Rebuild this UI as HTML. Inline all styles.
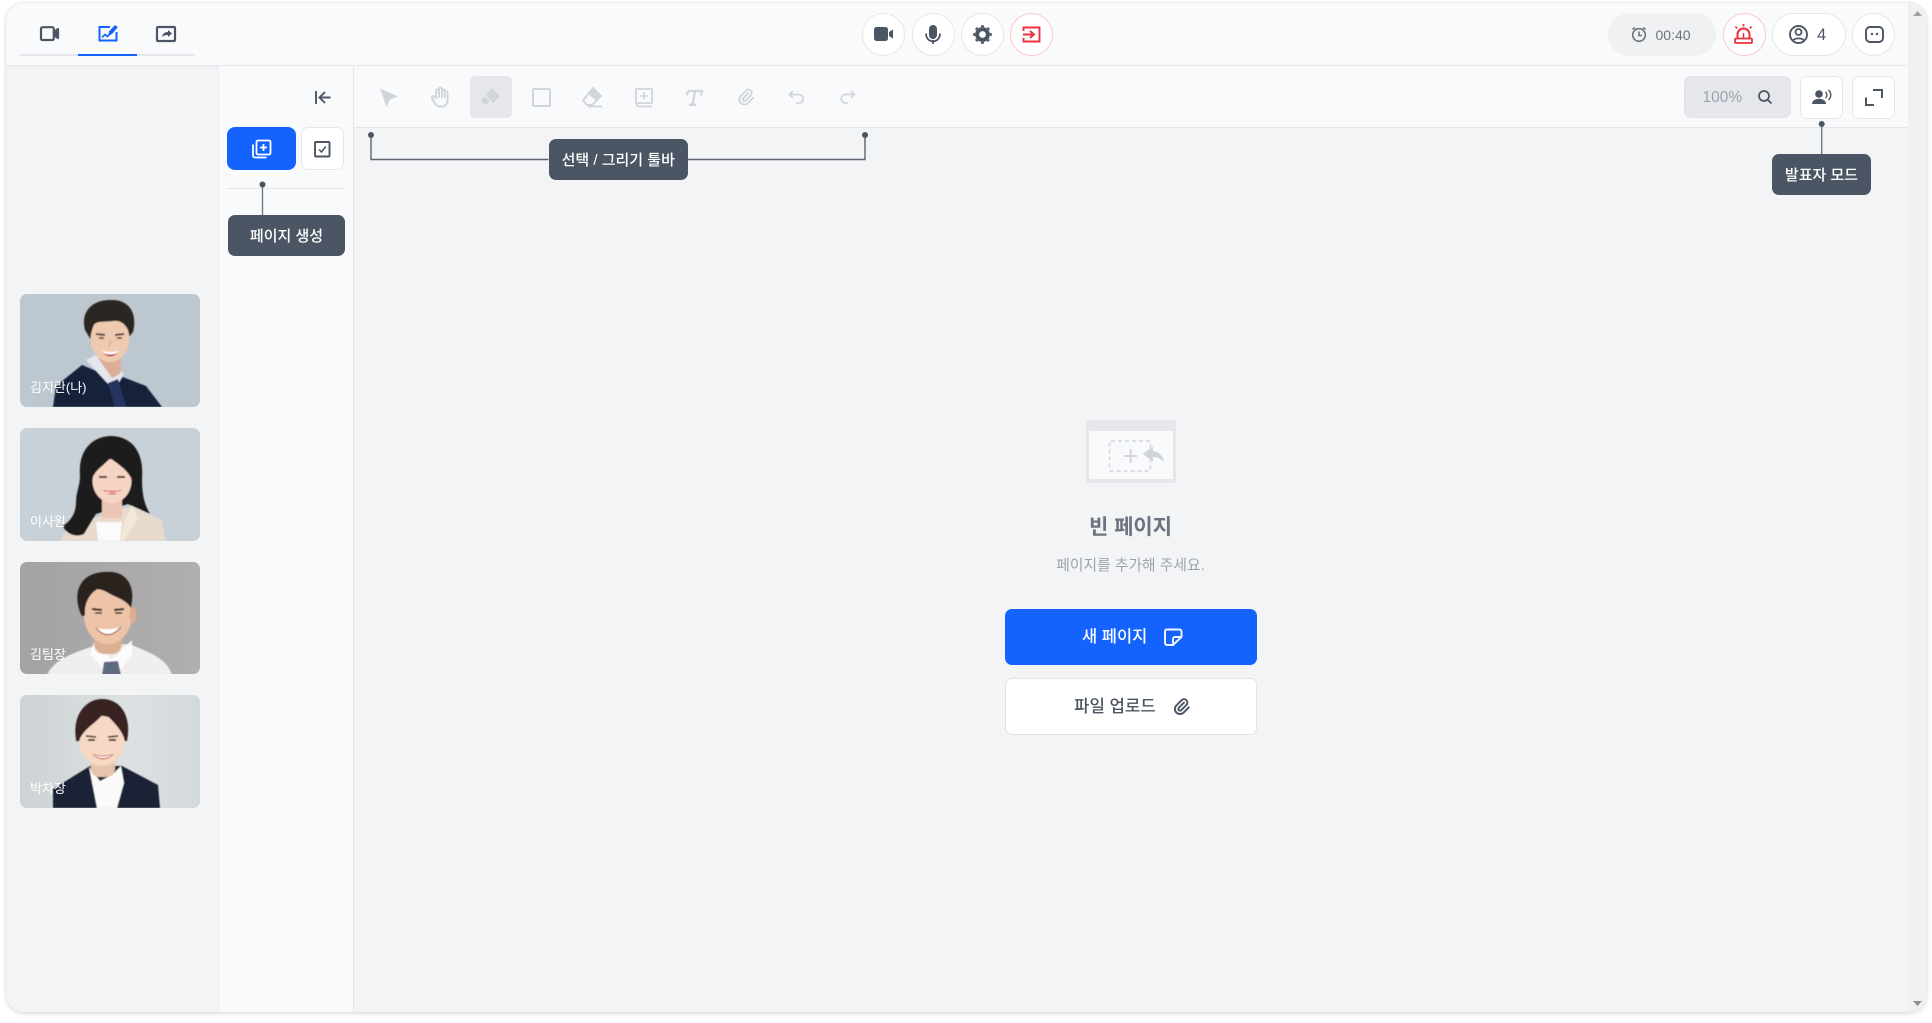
<!DOCTYPE html>
<html lang="ko"><head><meta charset="utf-8"><title>Whiteboard</title>
<style>
*{box-sizing:border-box;margin:0;padding:0}
html,body{width:1932px;height:1023px;overflow:hidden;background:#fff;font-family:"Liberation Sans","Noto Sans CJK KR",sans-serif}
.a{position:absolute}
.frame{left:6px;top:3px;width:1921px;height:1009px;border-radius:18px;overflow:hidden;background:#f3f4f6;box-shadow:0 2px 5px rgba(0,0,0,.13),0 -1px 2px rgba(0,0,0,.08)}
.hdr{left:6px;top:3px;width:1902px;height:63px;background:#f9fafb;border-bottom:1px solid #e5e7eb;border-radius:18px 0 0 0;box-shadow:0 1px 2px rgba(0,0,0,.04)}
.circ{border-radius:50%;background:#fff;border:1px solid #e5e7eb;width:43px;height:43px;top:13px}
.pill{border-radius:22px;top:13px;height:43px}
.sq{border-radius:7px;background:#fff;border:1px solid #e5e7eb}
.tip{background:#4b5563;color:#fff;border-radius:7px;font-size:15px;font-weight:500;display:flex;align-items:center;justify-content:center;white-space:nowrap}
.t{white-space:nowrap;line-height:1}
.name{position:absolute;left:10px;bottom:10px;color:#fff;font-size:13px;line-height:18px;white-space:nowrap}
.card{left:20px;width:180px;height:112.5px;border-radius:7px;overflow:hidden}
.card svg{display:block}
</style></head><body>
<div class="a frame"></div>
<div class="a" style="left:1908px;top:3px;width:19px;height:1009px;background:#f1f1f1;border-radius:0 18px 18px 0"></div>
<div class="a hdr"></div>
<!-- tabs -->
<div class="a" style="left:20px;top:53.5px;width:175px;height:2px;background:#e5e7eb"></div>
<div class="a" style="left:78px;top:53.5px;width:59px;height:2.3px;background:#1463ff"></div>
<!-- page panel -->
<div class="a" style="left:218px;top:66px;width:136px;height:946px;background:#f9fafb;border-left:1px solid #eceef1;border-right:1px solid #e5e7eb"></div>
<!-- toolbar -->
<div class="a" style="left:354px;top:66px;width:1554px;height:62px;background:#f9fafb;border-bottom:1px solid #e5e7eb"></div>
<div class="a" style="left:470px;top:76px;width:42px;height:42px;border-radius:5px;background:#e5e7eb"></div>
<div class="a" style="left:227px;top:127px;width:69px;height:43px;border-radius:8px;background:#1463ff"></div>
<div class="a sq" style="left:301px;top:127px;width:43px;height:43px"></div>
<div class="a" style="left:227px;top:188px;width:117px;height:1px;background:#e5e7eb"></div>
<!-- header controls -->
<div class="a circ" style="left:862px"></div>
<div class="a circ" style="left:911.5px"></div>
<div class="a circ" style="left:961px"></div>
<div class="a circ" style="left:1010px;border-color:#fbc9cc"></div>
<div class="a pill" style="left:1608px;width:108px;background:#f0f1f3"></div>
<div class="a t" style="left:1655.5px;top:27.500px;font-size:14px;color:#6b7280">00:40</div>
<div class="a circ" style="left:1723px;border-color:#fbc9cc"></div>
<div class="a pill" style="left:1772px;width:74px;background:#fff;border:1px solid #e5e7eb"></div>
<div class="a t" style="left:1817px;top:27px;font-size:16.500px;font-weight:500;color:#4b5563">4</div>
<div class="a circ" style="left:1852px"></div>
<div class="a" style="left:1684px;top:76px;width:107px;height:42px;border-radius:7px;background:#e5e7eb;border:1px solid #dfe2e6"></div>
<div class="a t" style="left:1702.5px;top:89.5px;font-size:15.500px;color:#9ca3af">100%</div>
<div class="a sq" style="left:1800px;top:75.5px;width:43px;height:43px"></div>
<div class="a sq" style="left:1852px;top:75.5px;width:43px;height:43px"></div>
<!-- tooltips -->
<div class="a tip" style="left:228px;top:215px;width:117px;height:41px">페이지 생성</div>
<div class="a tip" style="left:548.5px;top:139px;width:139.5px;height:41px">선택 / 그리기 툴바</div>
<div class="a tip" style="left:1772px;top:154px;width:99px;height:41px">발표자 모드</div>
<!-- centre -->
<div class="a" style="left:1086px;top:420px;width:90px;height:63px;background:#e5e7eb;border-radius:2px"></div>
<div class="a" style="left:1089px;top:431px;width:84px;height:48px;background:#f9fafb"></div>
<div class="a t" style="left:1030px;width:201px;text-align:center;top:516.500px;font-size:21px;font-weight:700;color:#6b7280">빈 페이지</div>
<div class="a t" style="left:1030px;width:201px;text-align:center;top:558.500px;font-size:14.800px;color:#9ca3af">페이지를 추가해 주세요.</div>
<div class="a" style="left:1005px;top:609px;width:252px;height:56px;border-radius:7px;background:#1463ff"></div>
<div class="a t" style="left:1082px;top:629px;font-size:16.500px;font-weight:500;color:#fff">새 페이지</div>
<div class="a" style="left:1005px;top:678px;width:252px;height:56.500px;border-radius:7px;background:#fff;border:1px solid #e1e4e8"></div>
<div class="a t" style="left:1074px;top:698.500px;font-size:16.800px;font-weight:500;color:#4b5563">파일 업로드</div>

<!-- participant cards -->
<div class="a card" style="top:294.3px"><svg width="180" height="113" viewBox="0 0 180 113"><defs><filter id="b"><feGaussianBlur stdDeviation=".55"/></filter></defs><rect width="180" height="113" fill="#bdc7d0"/><g filter="url(#b)">
<path d="M33 113L36 92L62 71L74 76L100 82L126 92L142 113Z" fill="#18213a"/>
<path d="M66 66L78 60L104 80L98 90L90 92Z" fill="#e3e8ee"/>
<path d="M88 89L98 85L106 113H95Z" fill="#283460"/>
<path d="M78 54H102L100 80L92 84L78 64Z" fill="#dcae96"/>
<path d="M65 36C60 16 74 6 90 6C108 5 118 18 113 38L108 44C108 34 104 28 98 26C88 30 78 28 74 30C72 34 71 42 71 46Z" fill="#2b2624"/>
<ellipse cx="90" cy="45" rx="19.500" ry="23" fill="#f0c9b1"/>
<path d="M71 38C68 30 74 16 90 14C104 14 112 26 109 38C106 30 100 26 94 27C86 28 78 27 74 30Z" fill="#2b2624"/>
<path d="M76 40l9 1M95 41l9-1" stroke="#3a2a25" stroke-width="1.800"/>
<path d="M79 44h5M97 44h5" stroke="#4a3632" stroke-width="1.400"/>
<path d="M82 57Q90 66 99 57Q90 59 82 57Z" fill="#fff"/><path d="M83 59Q90 66 98 59Q90 62 83 59Z" fill="#b9484a"/>
<path d="M91 46L89 54" stroke="#d8a98e" stroke-width="1"/>
</g></svg><div class="name">김지란(나)</div></div>
<div class="a card" style="top:428px"><svg width="180" height="113" viewBox="0 0 180 113"><rect width="180" height="113" fill="#c9d1d8"/><g filter="url(#b)">
<path d="M40 113L48 100L80 88L112 78L142 92L145 113Z" fill="#e8dacc"/>
<path d="M76 94H102L100 113H78Z" fill="#fbfbfb"/>
<path d="M112 78L118 90L104 113H100L105 92Z" fill="#f3e7da"/>
<path d="M60 48C58 20 74 8 92 8C112 9 124 24 122 50C122 66 124 76 130 86L108 76L76 86L64 106C56 110 46 106 43 98C52 92 56 84 56 74C56 64 60 58 60 48Z" fill="#1e1a1b"/>
<rect x="82" y="62" width="20" height="28" fill="#ecc6b4"/>
<ellipse cx="92" cy="53" rx="19.500" ry="22" fill="#f6d4c3"/>
<path d="M72 52C70 38 78 26 88 24C98 22 110 32 112 52C108 42 98 36 90 30C84 38 74 42 72 52Z" fill="#1e1a1b"/>
<path d="M79 49h8M97 49h8" stroke="#2c2220" stroke-width="1.800"/>
<path d="M83 62Q92 71 102 62Q92 64 83 62Z" fill="#e04a50"/><path d="M85 63Q92 66 100 63L98 65H87Z" fill="#fff"/>
</g></svg><div class="name">이사원</div></div>
<div class="a card" style="top:561.5px"><svg width="180" height="113" viewBox="0 0 180 113"><defs><linearGradient id="g3" x1="0" x2="1"><stop offset="0" stop-color="#a4a3a3"/><stop offset="1" stop-color="#b0aeae"/></linearGradient></defs><rect width="180" height="113" fill="url(#g3)"/><g filter="url(#b)">
<path d="M27 113C34 98 50 92 74 84L110 82C126 90 146 94 152 113Z" fill="#f1eeee"/>
<path d="M74 80L92 98L112 78L112 92L100 108L84 108L70 92Z" fill="#fdfcfc"/>
<path d="M84 100L98 99L101 113H82Z" fill="#5d6b80"/>
<rect x="74" y="68" width="28" height="24" rx="10" fill="#dcb092"/>
<path d="M60 50C52 28 62 10 86 10C106 8 116 24 111 44L112 54H62Z" fill="#29241f"/>
<ellipse cx="88" cy="53" rx="24" ry="29" fill="#edc4a8"/>
<ellipse cx="113" cy="53" rx="3.500" ry="8" fill="#dcac90"/>
<path d="M63 52C58 34 66 16 86 14C104 12 114 26 111 46C106 38 98 36 90 32C84 28 78 26 74 28C68 36 64 42 65 54Z" fill="#29241f"/>
<path d="M72 47l10 1M94 48l10-1" stroke="#2a201d" stroke-width="2"/>
<path d="M75 51h7M95 51h7" stroke="#3c2c28" stroke-width="1.500"/>
<path d="M76 66Q88 78 101 65Q88 69 76 66Z" fill="#fff"/><path d="M76 66Q88 80 101 65" stroke="#9c5a50" stroke-width="1" fill="none"/>
</g></svg><div class="name">김팀장</div></div>
<div class="a card" style="top:695px"><svg width="180" height="113" viewBox="0 0 180 113"><defs><linearGradient id="g4" x1="0" x2="1"><stop offset="0" stop-color="#ccd3d4"/><stop offset=".6" stop-color="#dde1e2"/><stop offset="1" stop-color="#d2d9dc"/></linearGradient></defs><rect width="180" height="113" fill="url(#g4)"/><g filter="url(#b)">
<path d="M33 113V94L70 71L102 71L138 90L140 113Z" fill="#1b2235"/>
<path d="M69 72L80 86L92 80L101 71L104 88L97 113H77Z" fill="#fafaf8"/>
<rect x="71" y="58" width="24" height="24" rx="8" fill="#e7c4ae"/>
<path d="M56 44C52 20 66 4 82 4C100 4 112 20 107 46H56Z" fill="#382420"/>
<ellipse cx="82" cy="46" rx="22.500" ry="25" fill="#f6d8c5"/>
<path d="M59 46C56 28 68 9 84 8C98 9 108 26 105 46C102 34 92 26 84 17C78 28 64 32 59 46Z" fill="#382420"/>
<path d="M66 41l10 1M88 42l10-1" stroke="#2a1f1c" stroke-width="1.600"/>
<path d="M68 45h7M89 45h7" stroke="#2f2320" stroke-width="1.800"/>
<path d="M72 59Q83 70 94 59Q83 62 72 59Z" fill="#d3605d"/><path d="M74 60Q83 63 92 60Q83 66 74 60Z" fill="#fff"/>
</g></svg><div class="name">박차장</div></div>

<!-- icons & connectors -->
<svg class="a" style="left:0;top:0" width="1932" height="1023" viewBox="0 0 1932 1023" fill="none">
<!-- scrollbar arrows -->
<path d="M1917.5 11L1922 16H1913Z" fill="#a3a3a3"/><path d="M1913 1001H1922L1917.5 1006Z" fill="#8f8f8f"/>
<!-- tabs -->
<g stroke="#4b5563" stroke-width="2.2" stroke-linejoin="round">
<rect x="41" y="27.2" width="12.8" height="12.8" rx="1.5"/><path d="M54 32L58 29V38L54 35Z" fill="#4b5563"/>
<rect x="157" y="27" width="18" height="14" rx="1"/></g>
<path d="M162 37C162.5 33.5 165 32 168 32V30L172 33.5L168 37V35C165.5 35 163.5 35.5 162 37Z" fill="#4b5563"/>
<path d="M110 27H99.500V40.500H116.500V32" stroke="#1463ff" stroke-width="2"/>
<path d="M102 37.500L105 34.500L107.500 36.500L111 33" stroke="#1463ff" stroke-width="1.600"/>
<path d="M109 31.500L115 25L117.800 27.200L112 34L108.500 35Z" fill="#1463ff"/>
<!-- circle buttons -->
<path d="M874 29.500A2.500 2.500 0 0 1 876.500 27H885.500A2.500 2.500 0 0 1 888 29.500V38.500A2.500 2.500 0 0 1 885.500 41H876.500A2.500 2.500 0 0 1 874 38.500Z" fill="#4b5563"/><path d="M889 32L893 29.500V38.500L889 36Z" fill="#4b5563"/>
<rect x="929" y="25" width="8" height="14" rx="4" fill="#4b5563"/><path d="M926 33.500C926 44 940 44 940 33.500M933 40V44" stroke="#4b5563" stroke-width="1.800"/>
<circle cx="982.500" cy="34.500" r="5.400" stroke="#4b5563" stroke-width="4"/>
<path d="M982.500 27V25.300M982.500 42V43.700M975 34.500H973.300M990 34.500H991.700M977.200 29.200L976 28M987.800 39.800L989 41M977.200 39.800L976 41M987.800 29.200L989 28" stroke="#4b5563" stroke-width="3"/>
<path d="M1023.500 31V27.500H1039.500V41.500H1023.500V38M1023 34.500H1033M1030 31L1034 34.500L1030 38" stroke="#ee2f3d" stroke-width="1.900"/>
<!-- clock -->
<circle cx="1639" cy="35" r="6.300" stroke="#6b7280" stroke-width="1.600"/><path d="M1639 31.500V35.500H1642M1632.500 29.500L1635 27.500M1645.500 29.500L1643 27.500" stroke="#6b7280" stroke-width="1.600"/>
<!-- alarm -->
<path d="M1737.500 38V34.500A6 6 0 0 1 1749.500 34.500V38" stroke="#ee2f3d" stroke-width="2"/><path d="M1743.500 33V38" stroke="#ee2f3d" stroke-width="1.500"/><rect x="1735" y="38.500" width="17" height="4.500" rx="1" stroke="#ee2f3d" stroke-width="1.800"/><path d="M1743.500 24V26.500M1735.500 26.500L1737 28.500M1751.500 26.500L1750 28.500" stroke="#ee2f3d" stroke-width="1.700"/>
<!-- user circle -->
<circle cx="1798.500" cy="34.500" r="8.500" stroke="#4b5563" stroke-width="1.900"/><circle cx="1798.500" cy="32" r="3" stroke="#4b5563" stroke-width="1.800"/><path d="M1793 41C1794 37.500 1803 37.500 1804 41" stroke="#4b5563" stroke-width="1.800"/>
<!-- chat -->
<rect x="1866" y="27" width="17" height="15" rx="4" stroke="#4b5563" stroke-width="1.900"/><circle cx="1872" cy="34" r="1.200" fill="#4b5563"/><circle cx="1877" cy="34" r="1.200" fill="#4b5563"/>
<!-- collapse -->
<path d="M316 91V104M330.500 97.500H320.500M325 92L319.500 97.500L325 103" stroke="#4b5563" stroke-width="1.900"/>
<!-- add page -->
<rect x="256.500" y="140.500" width="14" height="14" rx="1.500" stroke="#fff" stroke-width="1.800"/><path d="M263.500 144V151M260 147.500H267" stroke="#fff" stroke-width="1.800"/><path d="M253 144.500V155.500A2 2 0 0 0 255 157.500H266.500" stroke="#fff" stroke-width="1.800"/>
<!-- check -->
<rect x="315" y="142" width="14.500" height="14.500" rx="1" stroke="#4b5563" stroke-width="1.900"/><path d="M319 149.500L321.500 152L325.800 146.500" stroke="#4b5563" stroke-width="1.500"/>
<!-- toolbar -->
<path d="M380 88.500L398 96.500L390 99.500L386.500 107Z" fill="#d1d5db"/>
<path transform="translate(428.600 85.600) scale(.95)" stroke="#d1d5db" stroke-width="2" stroke-linecap="round" stroke-linejoin="round" d="M8 13V5.500a1.500 1.500 0 0 1 3 0V12M11 5.500v-2a1.500 1.500 0 1 1 3 0V12M14 5.500a1.500 1.500 0 0 1 3 0V12M17 7.500a1.500 1.500 0 0 1 3 0V16a6 6 0 0 1-6 6h-2 .2a6 6 0 0 1-5-2.700l-.2-.300c-.3-.480-1.400-2.400-3.300-5.700a1.500 1.500 0 0 1 .5-2 1.870 1.870 0 0 1 2.300.300L8 13"/>
<path d="M492 88L500 96.500L493.500 103L485.500 94.500Z" fill="#d1d5db"/><path d="M484.500 96L489.500 101.500L487 105L480.500 101.500Z" fill="#d1d5db"/>
<rect x="533" y="89" width="17" height="17" rx="1" stroke="#d1d5db" stroke-width="2"/>
<path d="M593 88L601 96L596 101L588 93Z" fill="#d1d5db"/>
<path d="M593 88L601 96L592 105H587L583 100.500Z" stroke="#d1d5db" stroke-width="1.900"/><path d="M588 106.500H602" stroke="#d1d5db" stroke-width="1.900"/>
<path d="M636 104V89H652V103H638A2 2 0 0 0 638 106.500H652" stroke="#d1d5db" stroke-width="1.800"/><path d="M644 92V99.500M640 96H648" stroke="#d1d5db" stroke-width="1.600"/>
<path d="M688 91H702L701 95.500M695 91L692.500 104.500M689 104.800H696M688 91L687 95.500" stroke="#d1d5db" stroke-width="2.300"/>
<path transform="translate(736.400 87.400) scale(.8)" d="M15 7l-6.500 6.500a1.500 1.500 0 0 0 3 3l6.500-6.500a3 3 0 0 0-6-6l-6.500 6.500a4.500 4.500 0 0 0 9 9l6.500-6.500" stroke="#d1d5db" stroke-width="2.300" stroke-linecap="round"/>
<path d="M793 91L789.500 94.500L793 98M790 94.500H799A4.200 4.200 0 0 1 799 103H796" stroke="#d1d5db" stroke-width="1.700"/>
<path d="M851 91L854.500 94.500L851 98M854 94.500H845.500A4.200 4.200 0 0 0 845.500 103H848" stroke="#d1d5db" stroke-width="1.700"/>
<!-- search, presenter, expand -->
<circle cx="1764" cy="96" r="5" stroke="#4b5563" stroke-width="1.700"/><path d="M1767.500 99.700L1771.500 103.500" stroke="#4b5563" stroke-width="1.700"/>
<circle cx="1819" cy="94" r="3.800" fill="#4b5563"/><path d="M1812 104C1812 97 1826 97 1826 104Z" fill="#4b5563"/><path d="M1825.500 92C1827.500 94 1827.500 96 1825.500 98M1828.500 90C1831.500 93 1831.500 97 1828.500 100" stroke="#4b5563" stroke-width="1.400"/>
<path d="M1873 90H1882V98M1874 105H1866V97.500" stroke="#4b5563" stroke-width="2"/>
<!-- connectors -->
<g stroke="#6b7280" stroke-width="1.300"><path d="M262.500 184.500V215M1821.700 124V154"/></g>
<path d="M371 135V159.500H548.500M688 159.500H865V135" stroke="#5c6470" stroke-width="1.400"/>
<g fill="#4b5563"><circle cx="262.500" cy="184.500" r="3"/><circle cx="371" cy="135" r="3"/><circle cx="865" cy="135" r="3"/><circle cx="1821.700" cy="124" r="3"/></g>
<!-- empty illustration -->
<rect x="1109.500" y="441" width="41" height="30" rx="1.500" stroke="#d1d5db" stroke-width="1.500" stroke-dasharray="4 3"/>
<path d="M1130.700 449.500V462.500M1124.200 456H1137.200" stroke="#d1d5db" stroke-width="2"/>
<path d="M1143 454L1153 446.500V451C1160 452 1163.500 456.500 1164 462.500C1161 458.500 1157.500 457 1153 457V461.500Z" fill="#d1d5db"/>
<!-- new page icon -->
<path d="M1173 645H1167A2 2 0 0 1 1165 643V631A2 2 0 0 1 1167 629.500H1179.500A2 2 0 0 1 1181.500 631.500V637ZM1173 645V639A2 2 0 0 1 1175 637H1181.500" stroke="#fff" stroke-width="1.900" opacity=".95"/>
<!-- clip -->
<path transform="translate(1172 697) scale(.8)" d="M15 7l-6.500 6.500a1.500 1.500 0 0 0 3 3l6.500-6.500a3 3 0 0 0-6-6l-6.500 6.500a4.500 4.500 0 0 0 9 9l6.500-6.500" stroke="#4b5563" stroke-width="2.400" stroke-linecap="round"/>
</svg>
</body></html>
